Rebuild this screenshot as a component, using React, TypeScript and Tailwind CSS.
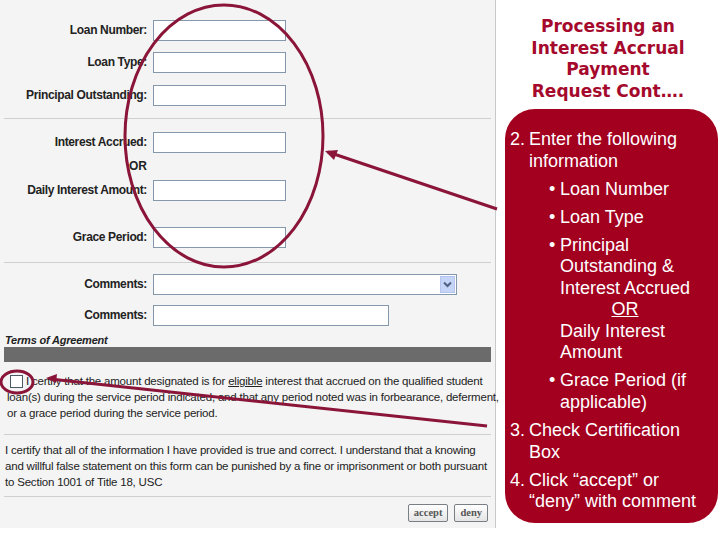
import React from "react";

const FORM_FONT = { fontFamily: '"Liberation Sans", Arial, sans-serif' };

function Field({ label, width = "w-[133px]", className = "" }: { label: string; width?: string; className?: string }) {
  return (
    <div className={`flex items-center ${className}`}>
      <div className="w-[147px] text-right text-[12px] font-bold tracking-[-0.35px] text-[#222] leading-[21px]">
        {label}
      </div>
      <div className={`ml-[6px] h-[21px] ${width} bg-white border border-[#8497ab]`} />
    </div>
  );
}

function Divider({ className = "" }: { className?: string }) {
  return <div className={`h-px mx-[4px] bg-[#cfcfcf] ${className}`} />;
}

function Annotations() {
  const c = "#8a1538";
  return (
    <svg className="absolute inset-0 pointer-events-none" width="720" height="540" viewBox="0 0 720 540">
      <ellipse cx="224" cy="136" rx="99" ry="131" fill="none" stroke={c} strokeWidth="3" />
      <line x1="497" y1="209" x2="328" y2="152" stroke={c} strokeWidth="3" />
      <path d="M325 151 L338 150 L334 160 Z" fill={c} />
      <ellipse cx="17" cy="382" rx="16" ry="11" fill="none" stroke={c} strokeWidth="3" />
      <line x1="487" y1="426" x2="50" y2="379" stroke={c} strokeWidth="3" />
      <path d="M46 378 L57 374 L56 383 Z" fill={c} />
    </svg>
  );
}

function Item({ children, className = "" }: { children: React.ReactNode; className?: string }) {
  return <div className={`flex ${className}`}>{children}</div>;
}

export default function App() {
  return (
    <div className="relative w-[720px] h-[540px] bg-white flex overflow-hidden">
      {/* form panel */}
      <div className="w-[496px] h-[528px] bg-[#f4f4f4] border-r border-[#c9c9c9] flex flex-col pt-[20px] text-[#222]" style={FORM_FONT}>
        <Field label="Loan Number:" />
        <Field label="Loan Type:" className="mt-[11px]" />
        <Field label="Principal Outstanding:" className="mt-[12px]" />
        <Divider className="mt-[12px]" />
        <Field label="Interest Accrued:" className="mt-[13px]" />
        <div className="mt-[5px] h-[16px] w-[147px] text-right text-[12px] font-bold leading-[16px]">OR</div>
        <Field label="Daily Interest Amount:" className="mt-[6px]" />
        <Field label="Grace Period:" className="mt-[26px]" />
        <Divider className="mt-[14px]" />
        <div className="mt-[11px] flex items-center">
          <div className="w-[147px] text-right text-[12px] font-bold tracking-[-0.35px] leading-[21px]">Comments:</div>
          <div className="ml-[6px] h-[21px] w-[304px] bg-white border border-[#8497ab] flex items-center justify-end pr-px">
            <div className="w-[15px] h-[17px] bg-[#c6d5f7] border border-[#b3c5ee] flex items-center justify-center">
              <svg width="9" height="7" viewBox="0 0 9 7">
                <path d="M1 1.5 L4.5 5 L8 1.5" fill="none" stroke="#4d6185" strokeWidth="2" />
              </svg>
            </div>
          </div>
        </div>
        <Field label="Comments:" width="w-[236px]" className="mt-[10px]" />
        <div className="mt-[7px] h-[14px] pl-[5px] text-[11px] font-bold italic leading-[14px] tracking-[-0.2px]">
          Terms of Agreement
        </div>
        <div className="h-[15px] mx-[4px] bg-[#6b6b6b]" />
        <div className="mt-[11px] pl-[7px] text-[11.5px] leading-[16px] tracking-[-0.2px] whitespace-nowrap">
          <div className="flex items-center">
            <span className="inline-block w-[13px] h-[13px] bg-white border border-[#4b5866] mr-[3px] ml-[3px]" />
            I certify that the amount designated is for <span className="underline mx-[3px]">eligible</span> interest that accrued on the qualified student
          </div>
          <div>loan(s) during the service period indicated, and that any period noted was in forbearance, deferment,</div>
          <div>or a grace period during the service period.</div>
        </div>
        <Divider className="mt-[13px]" />
        <div className="mt-[7px] pl-[5px] text-[11.5px] leading-[16px] tracking-[-0.2px] whitespace-nowrap">
          <div>I certify that all of the information I have provided is true and correct. I understand that a knowing</div>
          <div>and willful false statement on this form can be punished by a fine or imprisonment or both pursuant</div>
          <div>to Section 1001 of Title 18, USC</div>
        </div>
        <Divider className="mt-[6px]" />
        <div className="mt-[7px] flex justify-end gap-[6px] pr-[7px]">
          {["accept", "deny"].map((b) => (
            <div
              key={b}
              className="h-[18px] px-[5px] flex items-center rounded-[2px] border border-[#7a7f86] bg-gradient-to-b from-white to-[#e4e4e4] text-[10.5px] font-bold text-[#555] leading-none"
              style={{ fontFamily: '"Liberation Serif", "Times New Roman", serif' }}
            >
              {b}
            </div>
          ))}
        </div>
      </div>

      {/* instructions panel */}
      <div className="flex-1 flex flex-col">
        <div
          className="pt-[16px] text-center text-[17px] font-bold leading-[21.5px] text-[#a50a2d]"
          style={{ fontFamily: '"DejaVu Sans", Verdana, sans-serif' }}
        >
          Processing an<br />Interest Accrual<br />Payment<br />Request Cont….
        </div>
        <div
          className="mt-[7px] ml-[9px] w-[213px] h-[414px] rounded-[30px] bg-[#a3001f] text-white text-[18px] leading-[21.5px] pt-[20px] pl-[5px] whitespace-nowrap"
          style={FORM_FONT}
        >
          <Item>
            <span className="w-[19px]">2.</span>
            <span>Enter the following<br />information</span>
          </Item>
          <div className="pl-[39px]">
            <Item className="mt-[6.5px]"><span className="w-[11px]">•</span><span>Loan Number</span></Item>
            <Item className="mt-[6.5px]"><span className="w-[11px]">•</span><span>Loan Type</span></Item>
            <Item className="mt-[6.5px]">
              <span className="w-[11px]">•</span>
              <div className="w-[130px]">
                Principal<br />Outstanding &amp;<br />Interest Accrued
                <div className="text-center underline">OR</div>
                Daily Interest<br />Amount
              </div>
            </Item>
            <Item className="mt-[6.5px]"><span className="w-[11px]">•</span><span>Grace Period (if<br />applicable)</span></Item>
          </div>
          <Item className="mt-[7px]">
            <span className="w-[19px]">3.</span>
            <span>Check Certification<br />Box</span>
          </Item>
          <Item className="mt-[6.5px]">
            <span className="w-[19px]">4.</span>
            <span>Click “accept” or<br />“deny” with comment</span>
          </Item>
        </div>
      </div>

      <Annotations />
    </div>
  );
}
